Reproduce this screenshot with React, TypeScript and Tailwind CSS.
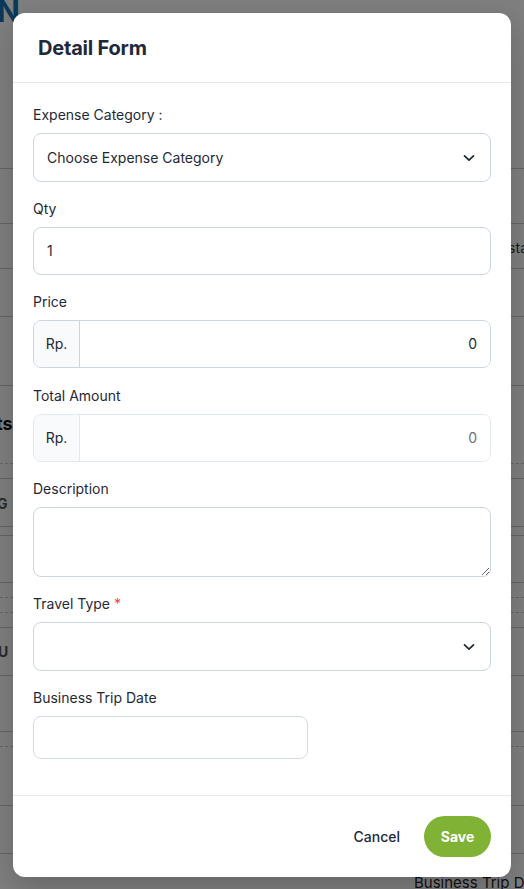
import { ReactNode } from 'react';

const font = { fontFamily: 'Inter, "Noto Sans", sans-serif' };

// rows of the page behind the modal: height and bottom border style
const bgRows: { h: number; line: 'solid' | 'dashed' | 'none' }[] = [
  { h: 169, line: 'solid' },
  { h: 55, line: 'solid' },
  { h: 45, line: 'solid' },
  { h: 48, line: 'solid' },
  { h: 69, line: 'solid' },
  { h: 78, line: 'dashed' },
  { h: 15, line: 'solid' },
  { h: 48, line: 'solid' },
  { h: 9, line: 'solid' },
  { h: 47, line: 'solid' },
  { h: 15, line: 'dashed' },
  { h: 15, line: 'dashed' },
  { h: 15, line: 'solid' },
  { h: 48, line: 'solid' },
  { h: 56, line: 'solid' },
  { h: 15, line: 'dashed' },
  { h: 59, line: 'solid' },
  { h: 48, line: 'solid' },
];

function Field({ label, required, children, gap = 'mb-[17px]' }: { label: string; required?: boolean; children: ReactNode; gap?: string }) {
  return (
    <div className={gap}>
      <div className="mb-2 text-sm leading-5 text-[#1f2937]">
        {label}
        {required && <span className="text-[#ef4444]"> *</span>}
      </div>
      {children}
    </div>
  );
}

function Chevron() {
  return (
    <svg width="12" height="8" viewBox="0 0 12 8" fill="none" className="shrink-0">
      <path d="M1.5 1.8 6 6.2l4.5-4.4" stroke="#1f2937" strokeWidth="1.7" strokeLinecap="round" strokeLinejoin="round" />
    </svg>
  );
}

function Select({ text }: { text?: string }) {
  return (
    <div className="flex h-[49px] items-center justify-between rounded-lg border border-[#cbd5e1] bg-white pl-[13px] pr-[15px] text-sm text-[#1f2937]">
      <span>{text}</span>
      <Chevron />
    </div>
  );
}

function MoneyInput({ value, disabled }: { value: string; disabled?: boolean }) {
  return (
    <div className={`flex h-12 overflow-hidden rounded-lg border ${disabled ? 'border-[#e2e8f0]' : 'border-[#cbd5e1]'}`}>
      <div className={`flex w-[46px] items-center justify-center border-r bg-[#f8fafc] text-sm text-[#1f2937] ${disabled ? 'border-[#e2e8f0]' : 'border-[#cbd5e1]'}`}>
        Rp.
      </div>
      <div className={`flex flex-1 items-center justify-end bg-white pr-[13px] text-sm ${disabled ? 'text-[#6b7280]' : 'text-[#1f2937]'}`}>
        {value}
      </div>
    </div>
  );
}

export default function App() {
  return (
    <div className="relative h-[889px] w-[524px] overflow-hidden bg-white" style={font}>
      {/* page behind the overlay */}
      <div className="absolute left-[-3px] top-[-4px] text-[30px] font-bold leading-none text-[#1673b3]">N</div>
      <div className="flex flex-col">
        {bgRows.map((r, i) => (
          <div
            key={i}
            className={`relative ${r.line === 'solid' ? 'border-b border-[#c4ccd6]' : r.line === 'dashed' ? 'border-b border-dashed border-[#c4ccd6]' : ''}`}
            style={{ height: r.h }}
          >
            {i === 2 && <span className="absolute right-[-4px] top-[14px] text-sm text-[#333]">sta</span>}
            {i === 5 && <span className="absolute left-[-4px] top-[24px] text-lg font-bold text-[#111]">ts</span>}
            {i === 7 && <span className="absolute left-[-3px] top-[15px] text-sm font-bold text-[#555]">G</span>}
            {i === 13 && <span className="absolute left-[-2px] top-[14px] text-sm font-bold text-[#555]">U</span>}
          </div>
        ))}
      </div>
      <div className="absolute left-[414px] top-[872px] whitespace-nowrap text-[15px] text-[#222]">Business Trip Date</div>

      {/* overlay */}
      <div className="absolute inset-0 bg-black/50">
        <div className="mx-[13px] mt-[13px] overflow-hidden rounded-xl bg-white shadow-[0_10px_30px_rgba(0,0,0,.2)]">
          <div className="flex h-[70px] items-center border-b border-[#e5e7eb] px-[25px]">
            <h2 className="text-xl font-bold tracking-[-0.01em] text-[#1e293b]">Detail Form</h2>
          </div>

          <div className="px-5 pb-9 pt-[22px]">
            <Field label="Expense Category :">
              <Select text="Choose Expense Category" />
            </Field>
            <Field label="Qty">
              <div className="flex h-12 items-center rounded-lg border border-[#cbd5e1] pl-[13px] text-sm text-[#1f2937]">1</div>
            </Field>
            <Field label="Price" gap="mb-[18px]">
              <MoneyInput value="0" />
            </Field>
            <Field label="Total Amount">
              <MoneyInput value="0" disabled />
            </Field>
            <Field label="Description">
              <textarea className="block h-[70px] w-full rounded-lg border border-[#cbd5e1] px-3 py-2 text-sm outline-none" />
            </Field>
            <Field label="Travel Type" required>
              <Select />
            </Field>
            <Field label="Business Trip Date" gap="">
              <div className="h-[43px] w-[275px] rounded-lg border border-[#d5dbe3]" />
            </Field>
          </div>

          <div className="flex items-center justify-end gap-2 border-t border-[#e5e7eb] px-5 py-5">
            <button className="h-[41px] px-4 text-sm font-medium text-[#1e293b]">Cancel</button>
            <button className="h-[41px] w-[67px] rounded-full bg-[#80b335] text-sm font-bold text-white">Save</button>
          </div>
        </div>
      </div>
    </div>
  );
}
